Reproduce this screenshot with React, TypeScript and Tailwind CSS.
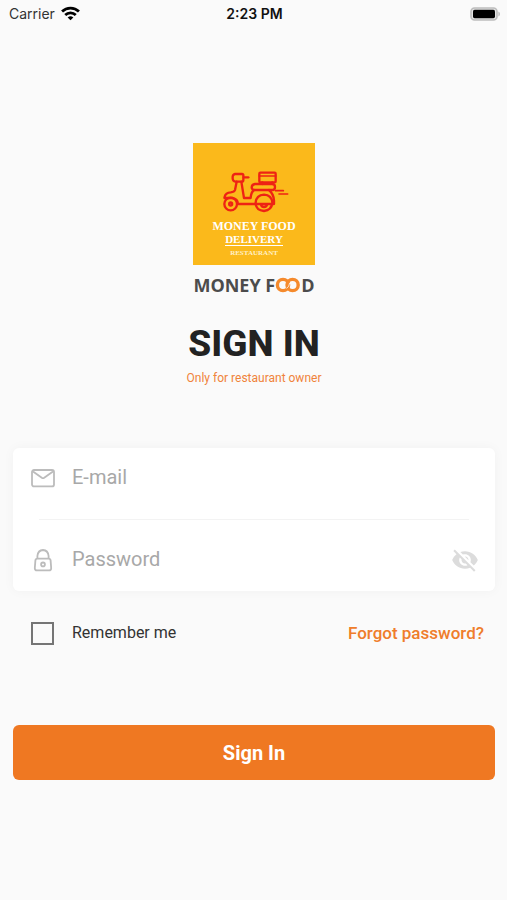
import { useState } from 'react';
import type { FormEvent } from 'react';

function StatusBar() {
  return (
    <header className="grid h-[27px] grid-cols-3 items-center pl-[9px] pr-[7px] font-['Inter',sans-serif] text-[14px] text-[#333]">
      <div className="flex items-center gap-1.5">
        <span>Carrier</span>
        <svg width="19" height="15" viewBox="0 0 18 14" fill="none" stroke="#000" strokeWidth="2.6" aria-hidden="true">
          <path d="M1 5.2a11.4 11.4 0 0 1 16 0" />
          <path d="M4 8.5a7.2 7.2 0 0 1 10 0" />
          <path d="M9 13.5 6.3 10.8a3.9 3.9 0 0 1 5.4 0z" fill="#000" stroke="none" />
        </svg>
      </div>
      <span className="text-center font-semibold text-[#111]">2:23 PM</span>
      <svg className="justify-self-end" width="30" height="14" viewBox="0 0 30 14" aria-hidden="true">
        <rect x="1" y="1" width="26" height="12" rx="3.5" fill="#e4e4e4" stroke="#bdbdbd" strokeWidth="1.6" />
        <rect x="3" y="2.8" width="22" height="8.4" rx="1.6" fill="#000" />
        <path d="M28.4 4.6v4.8a2.6 2.6 0 0 0 0-4.8z" fill="#bdbdbd" />
      </svg>
    </header>
  );
}

function Scooter() {
  return (
    <svg
      width="70"
      height="42"
      viewBox="28 35 210 126"
      fill="none"
      stroke="#ee2314"
      strokeWidth="7"
      strokeLinecap="round"
      strokeLinejoin="round"
      aria-hidden="true"
    >
      <circle cx="63" cy="134" r="19" />
      <circle cx="63" cy="134" r="4.5" />
      <path d="M45 116v-4q3-12 18-13 11-1 13-7l5-25" />
      <path d="M45 116h23q16 3 17 18h52" />
      <path d="M76 44h21q4 0 4 4v14q0 5-4 5H77q-7-1-8-9v-6q1-7 7-8z" />
      <path d="M103 54h13" />
      <path d="M95 67q3 18 8 49h20q1-17 10-24" />
      <rect x="149" y="40" width="49" height="29" rx="3" />
      <path d="M149 50h49" strokeWidth="5" />
      <path d="M158 69v5M188 69v5" />
      <path d="M132 92q-6-2-6-8 1-9 10-10h53q7 1 7 9 0 9-7 9z" />
      <path d="M138 134v-4q2-23 25-24 23 1 25 24-2 23-25 25-23-2-25-21z" />
      <path d="M138 134h55v-10q-1-20-15-32" />
      <path d="M154 136q2 7 9 7t9-7" />
      <path d="M198 94h23M208 104h26" strokeWidth="5" />
    </svg>
  );
}

function Logo() {
  return (
    <div className="flex flex-col items-center">
      <div className="flex size-[122px] flex-col items-center bg-[#fbb91b] pt-7 font-['Liberation_Serif',serif] text-white">
        <Scooter />
        <p className="mt-1.5 whitespace-nowrap text-[12px] font-bold leading-[14px]">MONEY FOOD</p>
        <p className="border-b border-white text-[11px] font-bold leading-[12px]">DELIVERY</p>
        <p className="mt-0.5 text-[7px] font-bold leading-[10px] text-[#fff0c8]">RESTAURANT</p>
      </div>
      <div className="mt-2 flex h-6 items-center font-['Open_Sans',sans-serif] text-[18px] font-bold leading-6 text-[#4c4c4c]">
        <span className="whitespace-pre">MONEY F</span>
        <svg width="26" height="16" viewBox="0 0 26 16" fill="none" stroke="#f58a2c" strokeWidth="3.4" aria-label="oo">
          <circle cx="8" cy="8" r="5.6" />
          <circle cx="17.6" cy="8" r="5.6" />
          <path d="M11.4 11.4q3-1.4 3.2-5.4" stroke="#fafafa" strokeWidth="0.8" />
        </svg>
        <span>D</span>
      </div>
    </div>
  );
}

function MailIcon() {
  return (
    <svg width="24" height="20" viewBox="0 0 24 20" fill="none" stroke="#bcbcbc" strokeWidth="1.8" strokeLinejoin="round" aria-hidden="true">
      <rect x="1" y="2" width="22" height="16.4" rx="2" />
      <path d="m2 3.4 8.8 6.4q1.2.8 2.4 0L22 3.4" />
    </svg>
  );
}

function LockIcon() {
  return (
    <svg width="24" height="24" viewBox="0 0 24 24" fill="none" stroke="#bcbcbc" strokeWidth="1.8" aria-hidden="true">
      <path d="M6.4 10.6h11.2q1.8 0 2 1.8l.6 7.8q0 2.2-2.2 2.2H6q-2.2 0-2.2-2.2l.6-7.8q.2-1.8 2-1.8z" />
      <path d="M6.4 10.6V8q.6-5.8 5.6-6 5 .2 5.6 6v2.6" />
      <circle cx="12" cy="16.4" r="1.9" />
    </svg>
  );
}

function EyeOffIcon() {
  return (
    <svg width="28" height="28" viewBox="0 0 24 24" fill="#dcdcdc" aria-hidden="true">
      <path d="M12 7c2.76 0 5 2.24 5 5 0 .65-.13 1.26-.36 1.83l2.92 2.92c1.51-1.26 2.7-2.89 3.43-4.75-1.73-4.39-6-7.5-11-7.5-1.4 0-2.74.25-3.98.7l2.16 2.16C10.74 7.13 11.35 7 12 7zM2 4.27l2.28 2.28.46.46C3.08 8.3 1.78 10.02 1 12c1.73 4.39 6 7.5 11 7.5 1.55 0 3.03-.3 4.38-.84l.42.42L19.73 22 21 20.73 3.27 3 2 4.27zM7.53 9.8l1.55 1.55c-.05.21-.08.43-.08.65 0 1.66 1.34 3 3 3 .22 0 .44-.03.65-.08l1.55 1.55c-.67.33-1.41.53-2.2.53-2.76 0-5-2.24-5-5 0-.79.2-1.53.53-2.2zm4.31-.78 3.15 3.15.02-.16c0-1.66-1.34-3-3-3l-.17.01z" />
    </svg>
  );
}

export default function App() {
  const [email, setEmail] = useState('');
  const [password, setPassword] = useState('');
  const [showPassword, setShowPassword] = useState(false);
  const [remember, setRemember] = useState(false);

  const handleSubmit = (e: FormEvent) => {
    e.preventDefault();
  };

  return (
    <div className="min-h-screen bg-[#fafafa] font-['Roboto',sans-serif] text-[#222]">
      <StatusBar />

      <main className="pb-8 pl-[13px] pr-3 pt-[116px]">
        <Logo />

        <div className="mt-6 text-center">
          <h1 className="text-[37px] font-extrabold leading-[46px]">SIGN IN</h1>
          <p className="mt-[3px] text-[12px] leading-4 text-[#f0833a]">Only for restaurant owner</p>
        </div>

        <form onSubmit={handleSubmit} className="mt-[62px]">
          <div className="rounded-md bg-white shadow-[0_0_12px_rgba(0,0,0,0.04)]">
            <div className="flex h-[71px] items-center gap-[17px] pb-3 pl-[18px] pr-4">
              <label htmlFor="email" aria-label="E-mail">
                <MailIcon />
              </label>
              <input
                id="email"
                type="email"
                placeholder="E-mail"
                value={email}
                onChange={(e) => setEmail(e.target.value)}
                className="h-10 min-w-0 flex-1 bg-transparent pb-0.5 text-[20px] outline-none placeholder:text-[#a8a8a8]"
              />
            </div>
            <div className="mx-[26px] h-px bg-[#f3f3f3]" />
            <div className="flex h-[71px] items-center gap-[17px] pl-[18px] pr-4 pt-2">
              <label htmlFor="password" aria-label="Password">
                <LockIcon />
              </label>
              <input
                id="password"
                type={showPassword ? 'text' : 'password'}
                placeholder="Password"
                value={password}
                onChange={(e) => setPassword(e.target.value)}
                className="h-10 min-w-0 flex-1 bg-transparent pb-0.5 text-[20px] outline-none placeholder:text-[#a8a8a8]"
              />
              <button type="button" aria-label="Toggle password visibility" onClick={() => setShowPassword(!showPassword)}>
                <EyeOffIcon />
              </button>
            </div>
          </div>

          <div className="mt-[30px] flex items-center justify-between pl-[18px] pr-[11px]">
            <label className="flex items-center gap-[18px] text-[16px] leading-6 text-[#333]">
              <input
                type="checkbox"
                checked={remember}
                onChange={(e) => setRemember(e.target.checked)}
                className="size-[23px] appearance-none border-2 border-[#757575] checked:bg-[#ef7822]"
              />
              Remember me
            </label>
            <a href="#forgot" className="text-[17px] font-medium leading-6 text-[#ef7d2b]">
              Forgot password?
            </a>
          </div>

          <button type="submit" className="mt-20 h-[55px] w-full rounded-md bg-[#ef7822] text-[20px] font-bold text-white">
            Sign In
          </button>
        </form>
      </main>
    </div>
  );
}
